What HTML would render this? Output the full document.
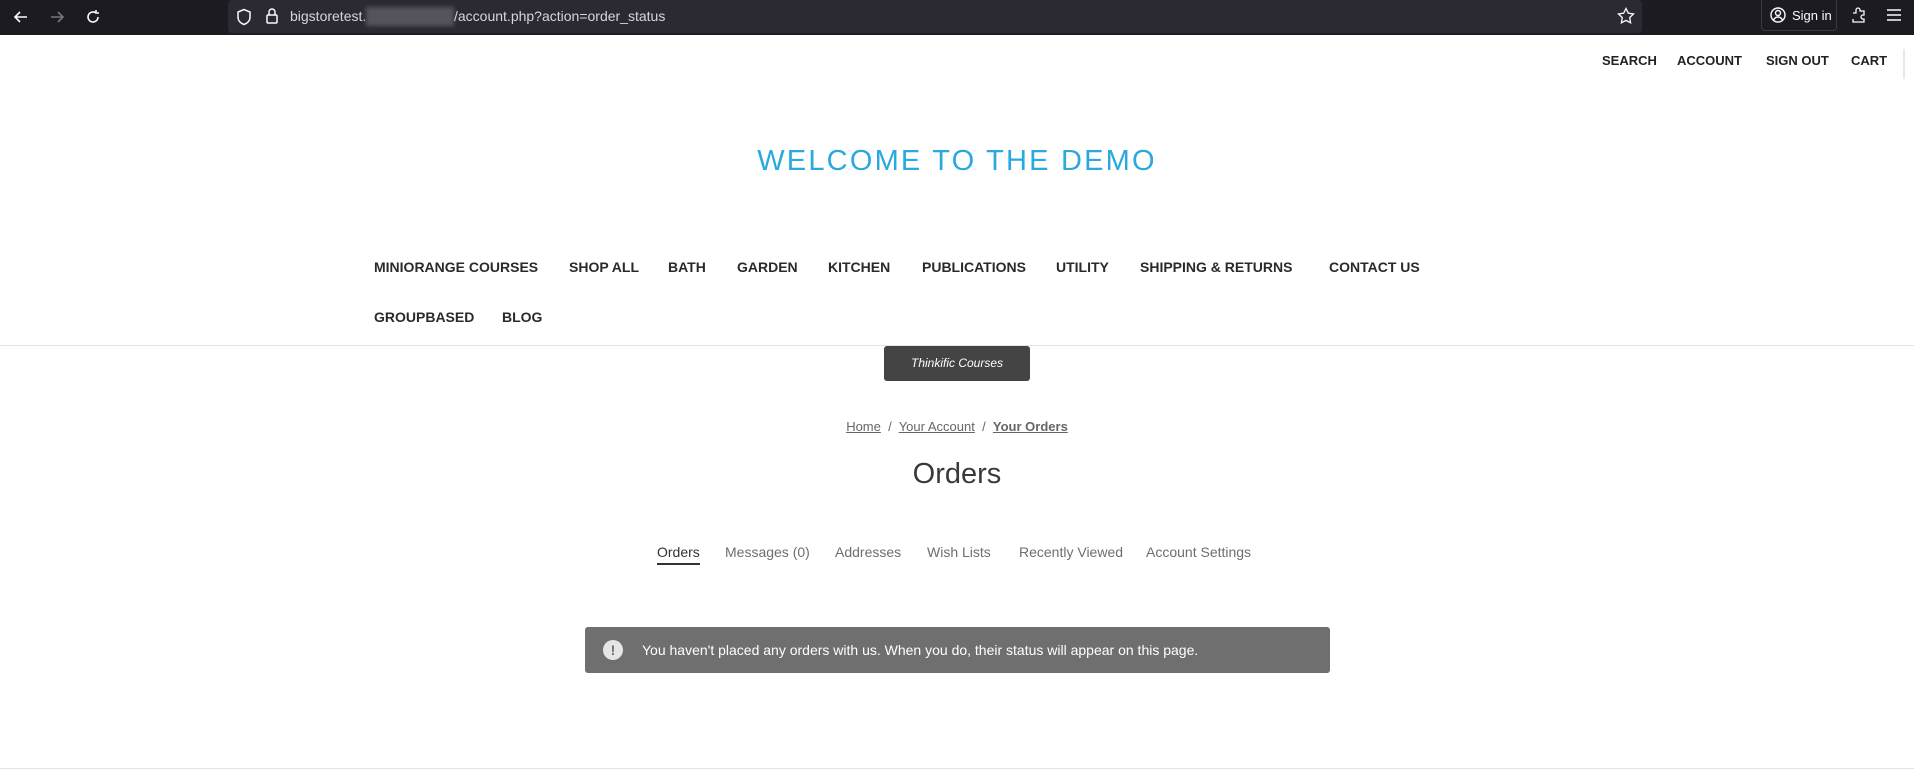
<!DOCTYPE html>
<html><head><meta charset="utf-8"><style>
*{margin:0;padding:0;box-sizing:border-box}
body{width:1914px;height:783px;position:relative;background:#fff;font-family:"Liberation Sans",sans-serif;overflow:hidden}
.a{position:absolute;white-space:nowrap}
.bar{position:absolute;left:0;top:0;width:1914px;height:35px;background:#1c1b22}
.url{position:absolute;left:228px;top:0;width:1414px;height:33px;background:#2b2a33;border-radius:4px}
.tn{font-weight:bold;font-size:13px;color:#222;top:53px}
.nv{font-weight:bold;font-size:14px;color:#2a2a2a}
.tab{font-size:14px;color:#6e6e6e;top:544px}
.bc{font-size:13px;color:#666;text-decoration:underline}
</style></head><body>
<div class="bar"></div>
<div class="url"></div>
<svg class="a" style="left:12px;top:8px" width="18" height="18" viewBox="0 0 18 18" fill="none" stroke="#fbfbfe" stroke-width="1.6"><path d="M15 9H3M8 4L3 9l5 5"/></svg>
<svg class="a" style="left:48px;top:8px" width="18" height="18" viewBox="0 0 18 18" fill="none" stroke="#77767c" stroke-width="1.6"><path d="M3 9h12M10 4l5 5-5 5"/></svg>
<svg class="a" style="left:84px;top:8px" width="18" height="18" viewBox="0 0 18 18" fill="none" stroke="#fbfbfe" stroke-width="1.6"><path d="M14 9a5 5 0 1 1-2-4M12 2v3h3"/></svg>
<svg class="a" style="left:236px;top:8px" width="16" height="18" viewBox="0 0 16 18" fill="none" stroke="#fbfbfe" stroke-width="1.5"><path d="M8 1.5L2 4v5c0 4 3 6.5 6 7.5 3-1 6-3.5 6-7.5V4z"/></svg>
<svg class="a" style="left:265px;top:7px" width="14" height="18" viewBox="0 0 14 18" fill="none" stroke="#fbfbfe" stroke-width="1.5"><rect x="2" y="8" width="10" height="8" rx="1"/><path d="M4 8V5a3 3 0 0 1 6 0v3"/></svg>
<div class="a" style="left:290px;top:8px;font-size:14px;color:#d6d6da">bigstoretest.</div>
<div class="a" style="left:366px;top:7px;width:88px;height:19px;background:#55545a;filter:blur(2px)"></div>
<div class="a" style="left:454px;top:8px;font-size:14px;color:#d6d6da">/account.php?action=order_status</div>
<svg class="a" style="left:1617px;top:7px" width="18" height="18" viewBox="0 0 18 18" fill="none" stroke="#fbfbfe" stroke-width="1.3"><path d="M9 1.5l2.3 4.7 5.2.8-3.8 3.6.9 5.2L9 13.4l-4.6 2.4.9-5.2L1.5 7l5.2-.8z"/></svg>
<div class="a" style="left:1761px;top:0;width:76px;height:31px;border:1px solid #3a3940;border-top:0;border-radius:0 0 4px 4px"></div>
<svg class="a" style="left:1770px;top:7px" width="16" height="16" viewBox="0 0 16 16" fill="none" stroke="#fbfbfe" stroke-width="1.4"><circle cx="8" cy="8" r="7"/><circle cx="8" cy="6" r="2.5"/><path d="M3.5 13c1-2 2.5-3 4.5-3s3.5 1 4.5 3"/></svg>
<div class="a" style="left:1792px;top:8px;font-size:13px;color:#fbfbfe">Sign in</div>
<svg class="a" style="left:1851px;top:6px" width="16" height="18" viewBox="0 0 16 18" fill="none" stroke="#fbfbfe" stroke-width="1.3"><path d="M2 7h3V4a2 2 0 0 1 4 0v1h4v4h-1a2 2 0 0 0 0 4h1v3H2v-3"/></svg>
<svg class="a" style="left:1886px;top:8px" width="16" height="14" viewBox="0 0 16 14" stroke="#fbfbfe" stroke-width="1.5"><path d="M1 2h14M1 7h14M1 12h14"/></svg>

<div class="a tn" style="left:1602px">SEARCH</div>
<div class="a tn" style="left:1677px">ACCOUNT</div>
<div class="a tn" style="left:1766px">SIGN OUT</div>
<div class="a tn" style="left:1851px">CART</div>
<div class="a" style="left:1903px;top:49px;width:2px;height:30px;background:#e8e8e8"></div>

<div class="a" style="left:757px;top:145px;width:400px;text-align:center;font-size:29px;color:#29a9de;letter-spacing:2.2px">WELCOME TO THE DEMO</div>

<div class="a nv" style="left:374px;top:259px">MINIORANGE COURSES</div>
<div class="a nv" style="left:569px;top:259px">SHOP ALL</div>
<div class="a nv" style="left:668px;top:259px">BATH</div>
<div class="a nv" style="left:737px;top:259px">GARDEN</div>
<div class="a nv" style="left:828px;top:259px">KITCHEN</div>
<div class="a nv" style="left:922px;top:259px">PUBLICATIONS</div>
<div class="a nv" style="left:1056px;top:259px">UTILITY</div>
<div class="a nv" style="left:1140px;top:259px">SHIPPING &amp; RETURNS</div>
<div class="a nv" style="left:1329px;top:259px">CONTACT US</div>
<div class="a nv" style="left:374px;top:309px">GROUPBASED</div>
<div class="a nv" style="left:502px;top:309px">BLOG</div>

<div class="a" style="left:0;top:345px;width:1914px;height:1px;background:#e2e2e2"></div>
<div class="a" style="left:884px;top:346px;width:146px;height:35px;background:#444;border-radius:3px;color:#fff;font-size:12px;font-style:italic;text-align:center;line-height:35px">Thinkific Courses</div>

<div class="a" style="left:0;top:419px;width:1914px;text-align:center;font-size:13px;color:#666"><span class="bc">Home</span> &nbsp;/&nbsp; <span class="bc">Your Account</span> &nbsp;/&nbsp; <span class="bc" style="font-weight:bold">Your Orders</span></div>
<div class="a" style="left:0;top:458px;width:1914px;text-align:center;font-size:29px;color:#3a3a3a">Orders</div>

<div class="a tab" style="left:657px;color:#333">Orders</div>
<div class="a" style="left:657px;top:563px;width:43px;height:2px;background:#333"></div>
<div class="a tab" style="left:725px">Messages (0)</div>
<div class="a tab" style="left:835px">Addresses</div>
<div class="a tab" style="left:927px">Wish Lists</div>
<div class="a tab" style="left:1019px">Recently Viewed</div>
<div class="a tab" style="left:1146px">Account Settings</div>

<div class="a" style="left:585px;top:627px;width:745px;height:46px;background:#6f6f6f;border-radius:3px"></div>
<div class="a" style="left:603px;top:640px;width:20px;height:20px;border-radius:50%;background:#e6e6e6;color:#6f6f6f;font-weight:bold;font-size:14px;text-align:center;line-height:20px">!</div>
<div class="a" style="left:642px;top:642px;font-size:14px;color:#fff">You haven't placed any orders with us. When you do, their status will appear on this page.</div>

<div class="a" style="left:0;top:768px;width:1914px;height:1px;background:#e2e2e2"></div>
</body></html>
